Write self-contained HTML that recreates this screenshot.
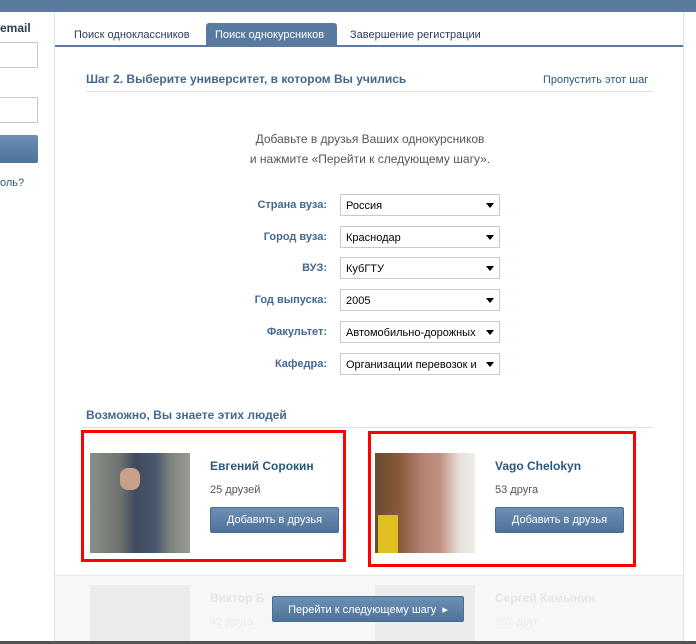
<!DOCTYPE html>
<html><head><meta charset="utf-8"><style>
*{margin:0;padding:0;box-sizing:border-box}
body{width:696px;height:644px;overflow:hidden;background:#fff;font-family:"Liberation Sans","DejaVu Sans",sans-serif;font-size:11px;color:#000;position:relative}
.a{position:absolute}
.sel{position:absolute;left:340px;width:160px;height:22px;border:1px solid #c0cad5;background:#fff;font-size:11px;padding:5px 0 0 5px;white-space:nowrap;overflow:hidden}
.sel:after{content:"";position:absolute;right:5px;top:8px;border-left:4px solid transparent;border-right:4px solid transparent;border-top:5px solid #000}
.sel span{display:block;width:136px;overflow:hidden}
.lbl{position:absolute;right:369px;font-weight:bold;color:#45688e;font-size:11px}
.btn{position:absolute;background:linear-gradient(#6d8fb3,#4e729a);color:#fff;border-radius:2px;text-align:center;font-size:11px;border:1px solid #4a6b91}
.name{position:absolute;font-weight:bold;color:#2b587a;font-size:12px}
.cnt{position:absolute;color:#555;font-size:11px}
.red{position:absolute;border:3px solid #f00}
</style></head><body>
<div class="a" style="left:0;top:0;width:696px;height:12px;background:#5b7aa0"></div>
<div class="a" style="left:0;top:21px;font-weight:bold;color:#2b3d55;font-size:12px">email</div>
<div class="a" style="left:-2px;top:42px;width:40px;height:26px;border:1px solid #c0cad5"></div>
<div class="a" style="left:-2px;top:97px;width:40px;height:26px;border:1px solid #c0cad5"></div>
<div class="a" style="left:-2px;top:135px;width:40px;height:28px;background:linear-gradient(#6d8fb3,#4e729a);border-radius:2px"></div>
<div class="a" style="left:0;top:177px;color:#2b587a;font-size:11px">оль?</div>
<div class="a" style="left:54px;top:12px;width:1px;height:630px;background:#dae1e8"></div>
<div class="a" style="left:683px;top:12px;width:1px;height:630px;background:#dae1e8"></div>
<div class="a" style="left:55px;top:45px;width:628px;height:2px;background:#5b7aa0"></div>
<div class="a" style="left:74px;top:29px;color:#2b3d55">Поиск одноклассников</div>
<div class="a" style="left:206px;top:23px;width:131px;height:23px;background:#5b7aa0;border-radius:3px 3px 0 0;color:#fff;padding:6px 0 0 9px">Поиск однокурсников</div>
<div class="a" style="left:350px;top:29px;color:#2b3d55">Завершение регистрации</div>
<div class="a" style="left:86px;top:72px;font-weight:bold;color:#45688e;font-size:12px">Шаг 2. Выберите университет, в котором Вы учились</div>
<div class="a" style="left:543px;top:74px;color:#2b587a">Пропустить этот шаг</div>
<div class="a" style="left:85px;top:91px;width:568px;height:1px;background:#dae1e8"></div>
<div class="a" style="left:180px;top:129px;width:380px;text-align:center;color:#555;font-size:12px;line-height:20px">Добавьте в друзья Ваших однокурсников<br>и нажмите «Перейти к следующему шагу».</div>
<div class="lbl" style="top:199px">Страна вуза:</div><div class="sel" style="top:194px"><span>Россия</span></div>
<div class="lbl" style="top:231px">Город вуза:</div><div class="sel" style="top:226px"><span>Краснодар</span></div>
<div class="lbl" style="top:262px">ВУЗ:</div><div class="sel" style="top:257px"><span>КубГТУ</span></div>
<div class="lbl" style="top:294px">Год выпуска:</div><div class="sel" style="top:289px"><span>2005</span></div>
<div class="lbl" style="top:326px">Факультет:</div><div class="sel" style="top:321px"><span>Автомобильно-дорожных</span></div>
<div class="lbl" style="top:358px">Кафедра:</div><div class="sel" style="top:353px"><span>Организации перевозок и</span></div>
<div class="a" style="left:86px;top:408px;font-weight:bold;color:#45688e;font-size:12px">Возможно, Вы знаете этих людей</div>
<div class="a" style="left:81px;top:427px;width:572px;height:1px;background:#dae1e8"></div>
<div class="red" style="left:81px;top:430px;width:265px;height:132px"></div>
<div class="red" style="left:368px;top:431px;width:268px;height:136px"></div>
<div class="a" style="left:90px;top:453px;width:100px;height:100px;background:linear-gradient(90deg,#8a8e88 0%,#6f7470 30%,#3f4a5e 45%,#4a5670 65%,#7e827c 80%,#9a9c96 100%)"></div>
<div class="a" style="left:120px;top:468px;width:20px;height:22px;background:#c9a08a;border-radius:8px"></div>
<div class="a" style="left:375px;top:453px;width:100px;height:100px;background:linear-gradient(90deg,#6a4a30 0%,#8a5a3a 25%,#b08070 45%,#c29080 65%,#e6e2dc 85%,#f0ece6 100%)"></div>
<div class="a" style="left:378px;top:515px;width:20px;height:38px;background:#e0c020"></div>
<div class="name" style="left:210px;top:459px">Евгений Сорокин</div>
<div class="cnt" style="left:210px;top:484px">25 друзей</div>
<div class="btn" style="left:210px;top:507px;width:129px;height:26px;padding-top:6px">Добавить в друзья</div>
<div class="name" style="left:495px;top:459px">Vago Chelokyn</div>
<div class="cnt" style="left:495px;top:484px">53 друга</div>
<div class="btn" style="left:495px;top:507px;width:129px;height:26px;padding-top:6px">Добавить в друзья</div>
<div class="a" style="left:55px;top:575px;width:628px;height:66px;background:#f7f7f7;border-top:1px solid #e6e9ed"></div>
<div class="a" style="left:90px;top:585px;width:100px;height:56px;background:#ececec"></div>
<div class="a" style="left:375px;top:585px;width:100px;height:56px;background:#ececec"></div>
<div class="a" style="left:210px;top:591px;font-weight:bold;color:#e6e6e6;font-size:12px">Виктор Б</div>
<div class="a" style="left:495px;top:591px;font-weight:bold;color:#e6e6e6;font-size:12px">Сергей Камынин</div>
<div class="a" style="left:210px;top:616px;color:#ececec">42 друга</div>
<div class="a" style="left:495px;top:616px;color:#ececec">191 друг</div>
<div class="btn" style="left:272px;top:596px;width:192px;height:26px;padding-top:6px">Перейти к следующему шагу &nbsp;▸</div>
<div class="a" style="left:0;top:641px;width:696px;height:3px;background:#555"></div>
</body></html>
